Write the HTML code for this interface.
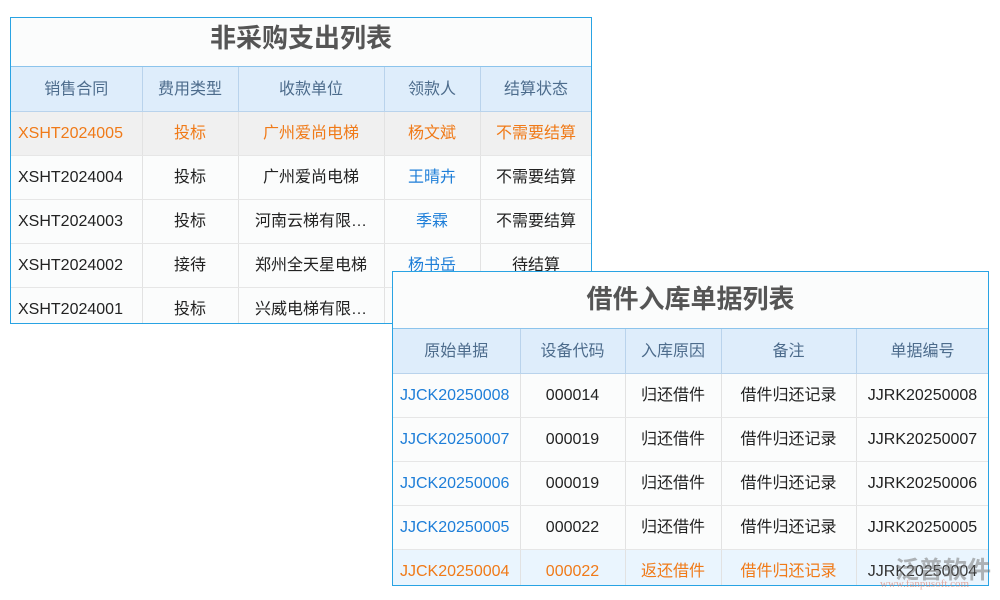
<!DOCTYPE html>
<html><head><meta charset="utf-8"><style>
body{margin:0;width:1000px;height:600px;background:#fff;position:relative;overflow:hidden;font-family:"Liberation Sans","Noto Sans CJK SC",sans-serif;}
.t{position:absolute;border:1px solid #29a3e3;background:#fbfcfc;overflow:hidden;box-sizing:border-box}
.title{height:49px;line-height:40px;text-align:center;font-size:26px;font-weight:bold;color:#555;border-bottom:1px solid #8cc4ec;box-sizing:border-box}
table{border-collapse:collapse;table-layout:fixed}
td{height:44px;padding:0;text-align:center;font-size:16px;color:#222;border-right:1px solid #e2e2e2;border-bottom:1px solid #e6e6e6;box-sizing:border-box;white-space:nowrap;overflow:hidden}
td.c{padding-bottom:4px}
td.n{padding-top:1px}
tr.h td{background:#deedfb;color:#4d6c8c;border-right:1px solid #b9d3ec;border-bottom:1px solid #b9d3ec;padding-bottom:3px}
td.l{text-align:left;padding-left:7px}
.o td{color:#f07a18}
.b{color:#1e7ed8!important}
</style></head><body>
<div class="t" style="left:10px;top:17px;width:582px;height:307px">
<div class="title">非采购支出列表</div>
<table style="width:581px">
<colgroup><col style="width:131px"><col style="width:96px"><col style="width:146px"><col style="width:96px"><col style="width:112px"></colgroup>
<tr class="h"><td>销售合同</td><td>费用类型</td><td>收款单位</td><td>领款人</td><td>结算状态</td></tr>
<tr class="o" style="background:#f0f0f0"><td class="l n">XSHT2024005</td><td class="c">投标</td><td class="c">广州爱尚电梯</td><td class="c">杨文斌</td><td class="c">不需要结算</td></tr>
<tr><td class="l n">XSHT2024004</td><td class="c">投标</td><td class="c">广州爱尚电梯</td><td class="b c">王晴卉</td><td class="c">不需要结算</td></tr>
<tr><td class="l n">XSHT2024003</td><td class="c">投标</td><td class="c">河南云梯有限…</td><td class="b c">季霖</td><td class="c">不需要结算</td></tr>
<tr><td class="l n">XSHT2024002</td><td class="c">接待</td><td class="c">郑州全天星电梯</td><td class="b c">杨书岳</td><td class="c">待结算</td></tr>
<tr><td class="l n">XSHT2024001</td><td class="c">投标</td><td class="c">兴威电梯有限…</td><td></td><td></td></tr>
</table></div>
<div class="t" style="left:392px;top:271px;width:597px;height:315px">
<div class="title" style="height:57px;line-height:54px">借件入库单据列表</div>
<table style="width:596px">
<colgroup><col style="width:127px"><col style="width:105px"><col style="width:96px"><col style="width:135px"><col style="width:133px"></colgroup>
<tr class="h"><td>原始单据</td><td>设备代码</td><td>入库原因</td><td>备注</td><td>单据编号</td></tr>
<tr><td class="l b n">JJCK20250008</td><td class="n">000014</td><td class="c">归还借件</td><td class="c">借件归还记录</td><td class="n">JJRK20250008</td></tr>
<tr><td class="l b n">JJCK20250007</td><td class="n">000019</td><td class="c">归还借件</td><td class="c">借件归还记录</td><td class="n">JJRK20250007</td></tr>
<tr><td class="l b n">JJCK20250006</td><td class="n">000019</td><td class="c">归还借件</td><td class="c">借件归还记录</td><td class="n">JJRK20250006</td></tr>
<tr><td class="l b n">JJCK20250005</td><td class="n">000022</td><td class="c">归还借件</td><td class="c">借件归还记录</td><td class="n">JJRK20250005</td></tr>
<tr class="o" style="background:#eaf5fe"><td class="l n">JJCK20250004</td><td class="n">000022</td><td class="c">返还借件</td><td class="c">借件归还记录</td><td class="n" style="color:#333">JJRK20250004</td></tr>
</table></div>
<div style="position:absolute;left:895px;top:550px;font-size:24px;font-weight:bold;color:rgba(120,120,120,.55)">泛普软件</div>
<div style="position:absolute;left:880px;top:578px;font-size:11px;color:rgba(220,120,100,.6);font-family:'Liberation Serif',serif">www.fanpusoft.com</div>
</body></html>
